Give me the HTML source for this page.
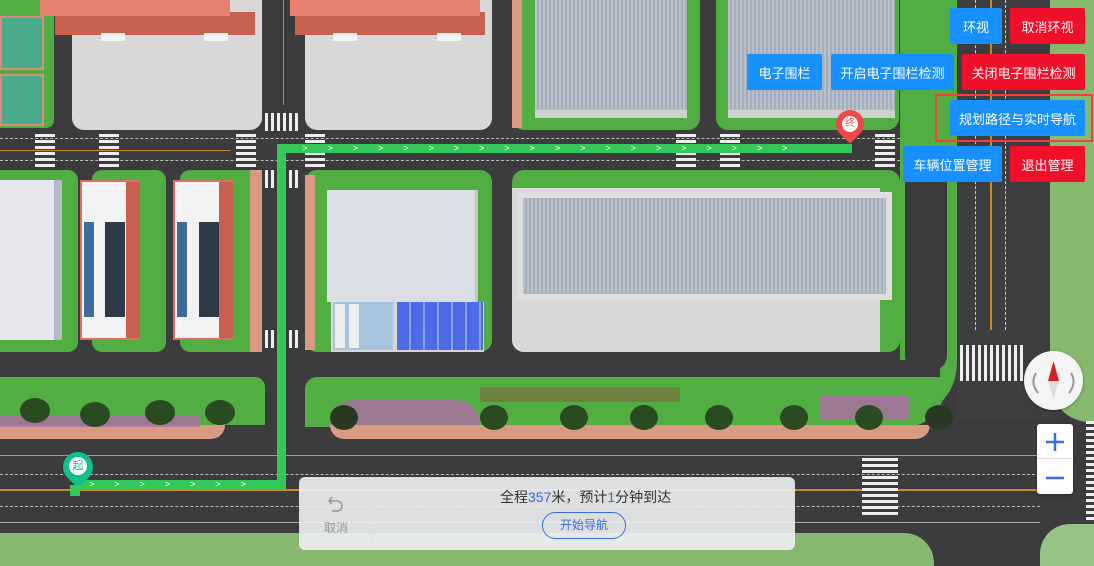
<!DOCTYPE html>
<html><head><meta charset="utf-8"><style>
*{margin:0;padding:0;box-sizing:border-box}
body{width:1094px;height:566px;overflow:hidden;position:relative;background:#3c3c3e;font-family:"Liberation Sans","Noto Sans CJK SC",sans-serif}
.a{position:absolute}
.g{background:#52ad42}
.pl{background:#d8d8d8}
.br{background:#d99a82}
.btn{position:absolute;height:36px;color:#fff;font-size:13px;display:flex;align-items:center;justify-content:center;border-radius:2px}
.bl{background:#1890ff}.rd{background:#f0102a}
.cw{position:absolute;background:repeating-linear-gradient(90deg,#eee 0 3px,transparent 3px 6px)}
.ch{position:absolute;background:repeating-linear-gradient(0deg,#eee 0 3px,transparent 3px 6px)}
.red{background:#e8806e}
.brk{background:#c8604e}
.sol{background:repeating-linear-gradient(90deg,#b8c0cc 0 2px,#a5afbd 2px 4px)}
</style></head><body>
<!-- top-left courts -->
<div class="a g" style="left:0;top:0;width:54px;height:128px;border-radius:0 0 8px 0"></div>
<div class="a" style="left:0;top:16px;width:44px;height:54px;background:#4aaa8c;border:2px solid #d98a7a"></div>
<div class="a" style="left:0;top:74px;width:44px;height:52px;background:#4aaa8c;border:2px solid #d98a7a"></div>
<!-- block A -->
<div class="a pl" style="left:72px;top:0;width:190px;height:130px;border-radius:0 0 12px 12px"></div>
<div class="a brk" style="left:55px;top:12px;width:200px;height:23px"></div>
<div class="a red" style="left:40px;top:0;width:190px;height:16px"></div>
<div class="a" style="left:101px;top:33px;width:24px;height:8px;background:#f4f4f4"></div>
<div class="a" style="left:204px;top:33px;width:24px;height:8px;background:#f4f4f4"></div>
<!-- block B -->
<div class="a pl" style="left:305px;top:0;width:187px;height:130px;border-radius:0 0 12px 12px"></div>
<div class="a brk" style="left:295px;top:12px;width:190px;height:23px"></div>
<div class="a red" style="left:290px;top:0;width:190px;height:16px"></div>
<div class="a" style="left:333px;top:33px;width:24px;height:8px;background:#f4f4f4"></div>
<div class="a" style="left:437px;top:33px;width:24px;height:8px;background:#f4f4f4"></div>
<!-- top right buildings -->
<div class="a g" style="left:512px;top:0;width:188px;height:130px;border-radius:0 0 12px 12px"></div>
<div class="a br" style="left:512px;top:0;width:10px;height:128px"></div>
<div class="a sol" style="left:535px;top:0;width:152px;height:118px;border-bottom:8px solid #d0d0d0"></div>
<div class="a g" style="left:716px;top:0;width:183px;height:130px;border-radius:0 0 12px 12px"></div>
<div class="a sol" style="left:728px;top:0;width:167px;height:118px;border-bottom:8px solid #d0d0d0"></div>
<!-- vertical road markings top -->
<div class="a" style="left:283px;top:0;width:1px;height:105px;background:#c98a20"></div>
<!-- horizontal road markings -->
<div class="a" style="left:0;top:138px;width:900px;border-top:1px dashed #bbb"></div>
<div class="a" style="left:0;top:160px;width:900px;border-top:1px dashed #bbb"></div>
<div class="a" style="left:0;top:150px;width:230px;border-top:1px solid #c98a20"></div>
<div class="ch" style="left:35px;top:133px;width:20px;height:34px"></div>
<div class="ch" style="left:99px;top:133px;width:20px;height:34px"></div>
<div class="ch" style="left:236px;top:133px;width:20px;height:34px"></div>
<div class="ch" style="left:305px;top:133px;width:20px;height:34px"></div>
<div class="ch" style="left:676px;top:133px;width:20px;height:34px"></div>
<div class="ch" style="left:720px;top:133px;width:20px;height:34px"></div>
<div class="ch" style="left:875px;top:133px;width:20px;height:34px"></div>
<div class="cw" style="left:265px;top:113px;width:36px;height:18px"></div>
<div class="cw" style="left:265px;top:170px;width:36px;height:18px"></div>
<div class="cw" style="left:265px;top:330px;width:36px;height:18px"></div>
<!-- middle left blocks -->
<div class="a g" style="left:0;top:170px;width:78px;height:182px;border-radius:0 10px 10px 0"></div>
<div class="a" style="left:0;top:180px;width:62px;height:160px;background:#e6e8ee;border-right:8px solid #b7bac2"></div>
<div class="a g" style="left:92px;top:170px;width:74px;height:182px;border-radius:10px"></div>
<div class="a" style="left:80px;top:180px;width:60px;height:160px;background:#f2f2f2;border:2px solid #d97060"></div>
<div class="a" style="left:84px;top:222px;width:10px;height:95px;background:#3f6a9c"></div>
<div class="a" style="left:105px;top:222px;width:20px;height:95px;background:#2f3a48"></div>
<div class="a" style="left:126px;top:182px;width:14px;height:156px;background:#c86050"></div>
<div class="a g" style="left:180px;top:170px;width:82px;height:182px;border-radius:10px"></div>
<div class="a br" style="left:250px;top:170px;width:12px;height:182px"></div>
<div class="a" style="left:173px;top:180px;width:60px;height:160px;background:#f2f2f2;border:2px solid #d97060"></div>
<div class="a" style="left:177px;top:222px;width:10px;height:95px;background:#3f6a9c"></div>
<div class="a" style="left:199px;top:222px;width:20px;height:95px;background:#2f3a48"></div>
<div class="a" style="left:219px;top:182px;width:14px;height:156px;background:#c86050"></div>
<!-- block C -->
<div class="a g" style="left:305px;top:170px;width:187px;height:182px;border-radius:12px"></div>
<div class="a br" style="left:305px;top:175px;width:10px;height:175px"></div>
<div class="a" style="left:327px;top:190px;width:151px;height:112px;background:#dcdee5;border-right:3px solid #c5c7cc"></div>
<div class="a" style="left:331px;top:302px;width:153px;height:50px;background:#d6d6d6"></div>
<div class="a" style="left:333px;top:302px;width:60px;height:48px;background:#a7c4de"></div>
<div class="a" style="left:335px;top:304px;width:10px;height:44px;background:#eee"></div>
<div class="a" style="left:349px;top:304px;width:10px;height:44px;background:#eee"></div>
<div class="a" style="left:397px;top:302px;width:86px;height:48px;background:repeating-linear-gradient(90deg,#4d6be6 0 12px,#8aa0e0 12px 14px)"></div>
<!-- block D -->
<div class="a g" style="left:512px;top:170px;width:388px;height:182px;border-radius:12px"></div>
<div class="a pl" style="left:512px;top:188px;width:368px;height:164px;border-radius:0 0 0 12px"></div>
<div class="a sol" style="left:517px;top:192px;width:375px;height:108px;border:6px solid #dedede"></div>
<!-- road near right -->
<div class="a g" style="left:900px;top:0;width:57px;height:420px;border-radius:0 0 60px 0"></div>
<div class="a" style="left:905px;top:165px;width:42px;height:205px;background:#3c3c3e;border-radius:0 0 14px 14px"></div>
<div class="a" style="left:880px;top:360px;width:60px;height:20px;background:#3c3c3e"></div>
<div class="a" style="left:957px;top:0;width:95px;height:420px;background:#3e3e40"></div>
<div class="a" style="left:990px;top:0;width:2px;height:330px;background:#c98a20"></div>
<div class="a" style="left:975px;top:0;height:330px;border-left:1px dashed #ccc"></div>
<div class="a" style="left:1005px;top:0;height:330px;border-left:1px dashed #ccc"></div>
<div class="a" style="left:1050px;top:0;width:44px;height:422px;background:#86b96e;border-radius:0 0 0 40px"></div>
<div class="cw" style="left:960px;top:345px;width:66px;height:36px"></div>
<!-- bottom road area -->
<div class="a g" style="left:0;top:377px;width:265px;height:48px;border-radius:0 10px 0 0"></div>
<div class="a br" style="left:0;top:425px;width:225px;height:14px;border-radius:0 0 18px 0"></div>
<div class="a" style="left:0;top:415px;width:200px;height:12px;background:#b06aa8;opacity:.8"></div>
<div class="a g" style="left:305px;top:377px;width:640px;height:50px;border-radius:12px 0 40px 0"></div>
<div class="a br" style="left:330px;top:425px;width:600px;height:14px;border-radius:0 0 20px 20px"></div>
<div class="a" style="left:330px;top:400px;width:150px;height:25px;background:#b06aa8;border-radius:60px 60px 0 0;opacity:.8"></div>
<div class="a" style="left:480px;top:387px;width:200px;height:15px;background:#8a5a40;opacity:.5"></div>
<div class="a" style="left:820px;top:395px;width:90px;height:25px;background:#b06aa8;opacity:.8"></div>
<div class="a" style="left:0;top:455px;width:1040px;border-top:1px solid #999"></div>
<div class="a" style="left:0;top:474px;width:1040px;border-top:1px dashed #bbb"></div>
<div class="a" style="left:0;top:489px;width:1040px;height:2px;background:#c98a20"></div>
<div class="a" style="left:0;top:506px;width:1040px;border-top:1px dashed #bbb"></div>
<div class="a" style="left:0;top:522px;width:1040px;border-top:1px solid #aaa"></div>
<div class="ch" style="left:862px;top:455px;width:36px;height:60px"></div>
<div class="ch" style="left:1086px;top:420px;width:8px;height:100px"></div>
<div class="a" style="left:0;top:533px;width:934px;height:33px;background:#88b870;border-radius:0 30px 0 0"></div>
<div class="a" style="left:1040px;top:524px;width:54px;height:42px;background:#98c486;border-radius:30px 0 0 0"></div>
<!-- trees -->
<div class="a" style="left:20px;top:398px;width:30px;height:25px;border-radius:50%;background:#2a4a22"></div>
<div class="a" style="left:80px;top:402px;width:30px;height:25px;border-radius:50%;background:#2a4a22"></div>
<div class="a" style="left:145px;top:400px;width:30px;height:25px;border-radius:50%;background:#2a4a22"></div>
<div class="a" style="left:205px;top:400px;width:30px;height:25px;border-radius:50%;background:#2a4a22"></div>
<div class="a" style="left:330px;top:405px;width:28px;height:25px;border-radius:50%;background:#2a3a22"></div>
<div class="a" style="left:480px;top:405px;width:28px;height:25px;border-radius:50%;background:#2a4a22"></div>
<div class="a" style="left:560px;top:405px;width:28px;height:25px;border-radius:50%;background:#2a4a22"></div>
<div class="a" style="left:630px;top:405px;width:28px;height:25px;border-radius:50%;background:#2a4a22"></div>
<div class="a" style="left:705px;top:405px;width:28px;height:25px;border-radius:50%;background:#2a4a22"></div>
<div class="a" style="left:780px;top:405px;width:28px;height:25px;border-radius:50%;background:#2a4a22"></div>
<div class="a" style="left:855px;top:405px;width:28px;height:25px;border-radius:50%;background:#2a4a22"></div>
<div class="a" style="left:925px;top:405px;width:28px;height:25px;border-radius:50%;background:#2a3a22"></div>
<!-- route -->
<div class="a" style="left:277px;top:144px;width:575px;height:9px;background:#33c85a;color:#fff;font-size:9px;line-height:9px;letter-spacing:20px;white-space:nowrap;overflow:hidden">&gt;&gt;&gt;&gt;&gt;&gt;&gt;&gt;&gt;&gt;&gt;&gt;&gt;&gt;&gt;&gt;&gt;&gt;&gt;&gt;&gt;</div>
<div class="a" style="left:277px;top:144px;width:9px;height:345px;background:#33c85a"></div>
<div class="a" style="left:75px;top:480px;width:211px;height:9px;background:#33c85a;color:#fff;font-size:9px;line-height:9px;letter-spacing:20px;white-space:nowrap;overflow:hidden;padding-left:14px">&gt;&gt;&gt;&gt;&gt;&gt;&gt;</div>
<!-- pins -->
<div class="a" style="left:836px;top:110px;width:28px;height:28px;border-radius:50% 50% 50% 0;transform:rotate(-45deg);background:#f04848"></div>
<div class="a" style="left:842px;top:116px;width:16px;height:16px;border-radius:50%;background:#fff;color:#f04848;font-size:10px;text-align:center;line-height:16px">终</div>
<div class="a" style="left:63px;top:452px;width:30px;height:30px;border-radius:50% 50% 50% 0;transform:rotate(-45deg);background:#10bf8a"></div>
<div class="a" style="left:69px;top:457px;width:18px;height:18px;border-radius:50%;background:#fff;color:#10bf8a;font-size:11px;text-align:center;line-height:18px">起</div>
<div class="a" style="left:70px;top:485px;width:10px;height:11px;background:#33c85a"></div>
<!-- buttons -->
<div class="btn bl" style="left:950px;top:8px;width:52px">环视</div>
<div class="btn rd" style="left:1010px;top:8px;width:75px">取消环视</div>
<div class="btn bl" style="left:747px;top:54px;width:75px">电子围栏</div>
<div class="btn bl" style="left:831px;top:54px;width:123px">开启电子围栏检测</div>
<div class="btn rd" style="left:962px;top:54px;width:123px">关闭电子围栏检测</div>
<div class="a" style="left:935px;top:94px;width:158px;height:48px;border:2px solid #f04040"></div>
<div class="btn bl" style="left:950px;top:100px;width:135px">规划路径与实时导航</div>
<div class="btn bl" style="left:903px;top:146px;width:99px">车辆位置管理</div>
<div class="btn rd" style="left:1010px;top:146px;width:75px">退出管理</div>
<!-- compass -->
<div class="a" style="left:1024px;top:351px;width:59px;height:59px;border-radius:50%;background:#f4f4f4;box-shadow:0 1px 3px rgba(0,0,0,.3)"></div>
<svg class="a" style="left:1024px;top:351px" width="59" height="59" viewBox="0 0 59 59"><path d="M12 22 Q6 32 14 42" fill="none" stroke="#999" stroke-width="2"/><path d="M47 22 Q53 32 45 42" fill="none" stroke="#999" stroke-width="2"/><path d="M29.5 10 L24 30 L35 30Z" fill="#d82020"/><path d="M29.5 48 L24 30 L35 30Z" fill="#ddd"/></svg>
<div class="a" style="left:1037px;top:424px;width:36px;height:70px;background:#fff;border-radius:3px;box-shadow:0 1px 3px rgba(0,0,0,.3)"></div>
<div class="a" style="left:1037px;top:458px;width:36px;height:1px;background:#ddd"></div>
<svg class="a" style="left:1037px;top:424px" width="36" height="70"><path d="M9 18H27M18 9V27" stroke="#3a6be0" stroke-width="2.5"/><path d="M9 54H27" stroke="#3a6be0" stroke-width="2.5"/></svg>
<!-- bottom panel -->
<div class="a" style="left:299px;top:477px;width:496px;height:73px;background:rgba(238,240,242,.9);border-radius:6px"></div>
<div class="a" style="left:372px;top:485px;width:1px;height:58px;background:#e0e0e0"></div>
<svg class="a" style="left:326px;top:494px" width="20" height="20" viewBox="0 0 20 20"><path d="M6 3 L3 7 L6 10 M3 7 H11 A5 5 0 0 1 11 17 H6" fill="none" stroke="#999" stroke-width="1.5"/></svg>
<div class="a" style="left:324px;top:519px;font-size:12px;color:#999">取消</div>
<div class="a" style="left:500px;top:487px;font-size:14px;color:#333">全程<span style="color:#3a6be0">357</span>米，预计<span style="color:#3a6be0">1</span>分钟到达</div>
<div class="a" style="left:542px;top:512px;width:84px;height:27px;border:1px solid #3a6be0;border-radius:14px;color:#3a6be0;font-size:12px;text-align:center;line-height:25px">开始导航</div>
</body></html>
